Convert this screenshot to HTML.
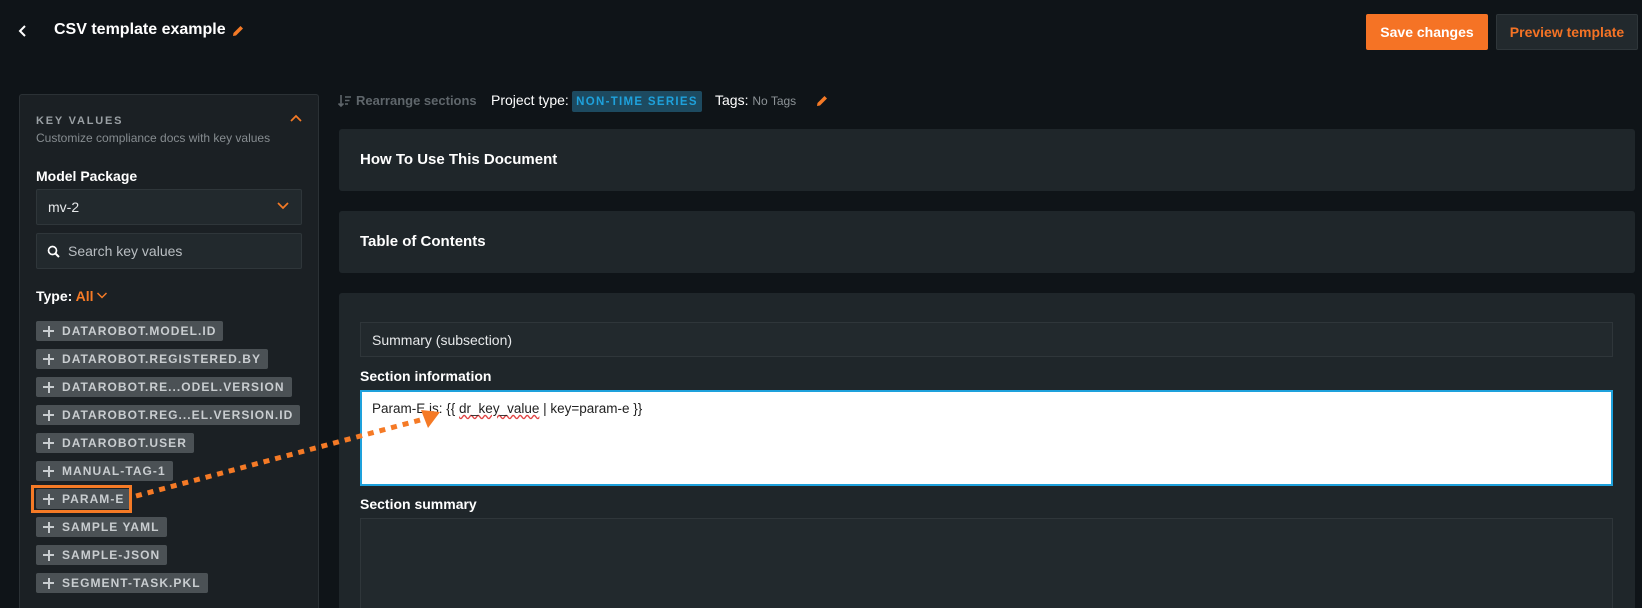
<!DOCTYPE html>
<html><head><meta charset="utf-8"><style>
*{box-sizing:border-box;margin:0;padding:0}
html{width:1642px;height:608px;overflow:hidden}
body{width:1642px;height:608px;overflow:hidden;background:#0f1418;font-family:"Liberation Sans",sans-serif;color:#fff;position:relative}
.a{position:absolute;white-space:nowrap}
.tag{position:absolute;left:36px;height:20px;background:#4b5155;border-radius:2px;color:#c9cdd0;font-size:12px;font-weight:bold;letter-spacing:1.05px;line-height:20px;padding:0 7px 0 26px;white-space:nowrap}
.tag:before{content:"";position:absolute;left:7px;top:9px;width:11px;height:2px;background:#c9cdd0}
.tag:after{content:"";position:absolute;left:11.5px;top:4.5px;width:2px;height:11px;background:#c9cdd0}
.card{position:absolute;left:339px;width:1296px;background:#1f262a;border-radius:3px}
.h{font-size:15px;font-weight:bold;color:#fff}
</style></head><body>
<svg class="a" style="left:17px;top:24px" width="12" height="14"><path d="M8 2 L3 7 L8 12" stroke="#fff" stroke-width="2" fill="none"/></svg>
<div class="a" style="left:54px;top:21px;font-size:16px;font-weight:bold">CSV template example</div>
<svg class="a" style="left:231px;top:24px" width="14" height="14"><path d="M2 12 L2.5 9 L9.5 2 L12 4.5 L5 11.5 Z" fill="#f57a26"/></svg>
<div class="a" style="left:1366px;top:14px;width:122px;height:36px;background:#f57325;border-radius:2px;font-size:14px;font-weight:bold;text-align:center;line-height:36px">Save changes</div>
<div class="a" style="left:1496px;top:14px;width:142px;height:36px;background:#22292d;border:1px solid #2f363a;border-radius:2px;font-size:14px;font-weight:bold;color:#f57325;text-align:center;line-height:34px">Preview template</div>

<div class="a" style="left:19px;top:94px;width:300px;height:514px;background:#1b2024;border:1px solid #2b3135;border-bottom:none;border-radius:3px 3px 0 0"></div>
<div class="a" style="left:36px;top:115px;font-size:11px;font-weight:bold;letter-spacing:1.8px;color:#9aa0a4">KEY VALUES</div>
<div class="a" style="left:36px;top:131px;font-size:12px;color:#868c90">Customize compliance docs with key values</div>
<svg class="a" style="left:289px;top:113px" width="14" height="10"><path d="M2 8 L7 3 L12 8" stroke="#f57a26" stroke-width="1.7" fill="none"/></svg>
<div class="a" style="left:36px;top:168px;font-size:14px;font-weight:bold">Model Package</div>
<div class="a" style="left:36px;top:189px;width:266px;height:36px;background:#22292d;border:1px solid #2f363a;border-radius:2px"></div>
<div class="a" style="left:48px;top:199px;font-size:14px;color:#e6e8ea">mv-2</div>
<svg class="a" style="left:276px;top:201px" width="14" height="10"><path d="M2 2 L7 7 L12 2" stroke="#f57a26" stroke-width="1.7" fill="none"/></svg>
<div class="a" style="left:36px;top:233px;width:266px;height:36px;background:#22292d;border:1px solid #2f363a;border-radius:2px"></div>
<svg class="a" style="left:47px;top:245px" width="14" height="14"><circle cx="5.5" cy="5.5" r="4" stroke="#fff" stroke-width="1.7" fill="none"/><path d="M8.5 8.5 L12 12" stroke="#fff" stroke-width="2"/></svg>
<div class="a" style="left:68px;top:243px;font-size:14px;color:#b9bec2">Search key values</div>
<div class="a" style="left:36px;top:288px;font-size:14px;font-weight:bold">Type: <span style="color:#f57a26">All</span></div>
<svg class="a" style="left:96px;top:291px" width="12" height="9"><path d="M1.5 2 L6 6.5 L10.5 2" stroke="#f57a26" stroke-width="1.5" fill="none"/></svg>

<div class="tag" style="top:321px">DATAROBOT.MODEL.ID</div>
<div class="tag" style="top:349px">DATAROBOT.REGISTERED.BY</div>
<div class="tag" style="top:377px">DATAROBOT.RE...ODEL.VERSION</div>
<div class="tag" style="top:405px">DATAROBOT.REG...EL.VERSION.ID</div>
<div class="tag" style="top:433px">DATAROBOT.USER</div>
<div class="tag" style="top:461px">MANUAL-TAG-1</div>
<div class="tag" style="top:489px">PARAM-E</div>
<div class="tag" style="top:517px">SAMPLE YAML</div>
<div class="tag" style="top:545px">SAMPLE-JSON</div>
<div class="tag" style="top:573px">SEGMENT-TASK.PKL</div>
<div class="a" style="left:31px;top:485px;width:101px;height:28px;border:3px solid #f57a26"></div>

<svg class="a" style="left:337px;top:93px" width="16" height="16"><path d="M4 2 V13 M1.5 10.5 L4 13 L6.5 10.5 M8 4 H14 M8 7.5 H12.5 M8 11 H11" stroke="#5f666b" stroke-width="1.6" fill="none"/></svg>
<div class="a" style="left:356px;top:93px;font-size:13px;font-weight:bold;color:#5f666b">Rearrange sections</div>
<div class="a" style="left:491px;top:92px;font-size:14px;color:#fff">Project type:</div>
<div class="a" style="left:572px;top:91px;width:130px;height:21px;background:#1d4a60;border-radius:2px;color:#1ea1dc;font-size:11.5px;font-weight:bold;letter-spacing:1.3px;line-height:22px;text-align:center">NON-TIME SERIES</div>
<div class="a" style="left:715px;top:92px;font-size:14px">Tags: <span style="font-size:12px;color:#8d9397">No Tags</span></div>
<svg class="a" style="left:815px;top:94px" width="14" height="14"><path d="M2 12 L2.5 9 L9.5 2 L12 4.5 L5 11.5 Z" fill="#f57a26"/></svg>

<div class="card" style="top:129px;height:62px"><div class="h a" style="left:21px;top:22px">How To Use This Document</div></div>
<div class="card" style="top:211px;height:62px"><div class="h a" style="left:21px;top:22px">Table of Contents</div></div>
<div class="card" style="top:293px;height:315px;border-radius:3px 3px 0 0"></div>
<div class="a" style="left:360px;top:322px;width:1253px;height:35px;background:#22292d;border:1px solid #2f363a"></div>
<div class="a" style="left:372px;top:332px;font-size:14px;color:#e6e8ea">Summary (subsection)</div>
<div class="a" style="left:360px;top:368px;font-size:14px;font-weight:bold">Section information</div>
<div class="a" style="left:360px;top:390px;width:1253px;height:96px;background:#fff;border:2px solid #1ea1dc"></div>
<div class="a" style="left:372px;top:401px;font-size:13.5px;color:#222">Param-E is: {{ <span style="text-decoration:underline wavy #e04444">dr_key_value</span> | key=param-e }}</div>
<div class="a" style="left:360px;top:496px;font-size:14px;font-weight:bold">Section summary</div>
<div class="a" style="left:360px;top:518px;width:1253px;height:90px;background:#22292d;border:1px solid #2f363a;border-bottom:none"></div>

<svg class="a" style="left:0;top:0" width="1642" height="608"><path d="M136 496 L424 419" stroke="#f57a26" stroke-width="5" stroke-dasharray="6 6" fill="none"/><path d="M440 412 L421 410 L428 428 Z" fill="#f57a26"/></svg>
</body></html>
